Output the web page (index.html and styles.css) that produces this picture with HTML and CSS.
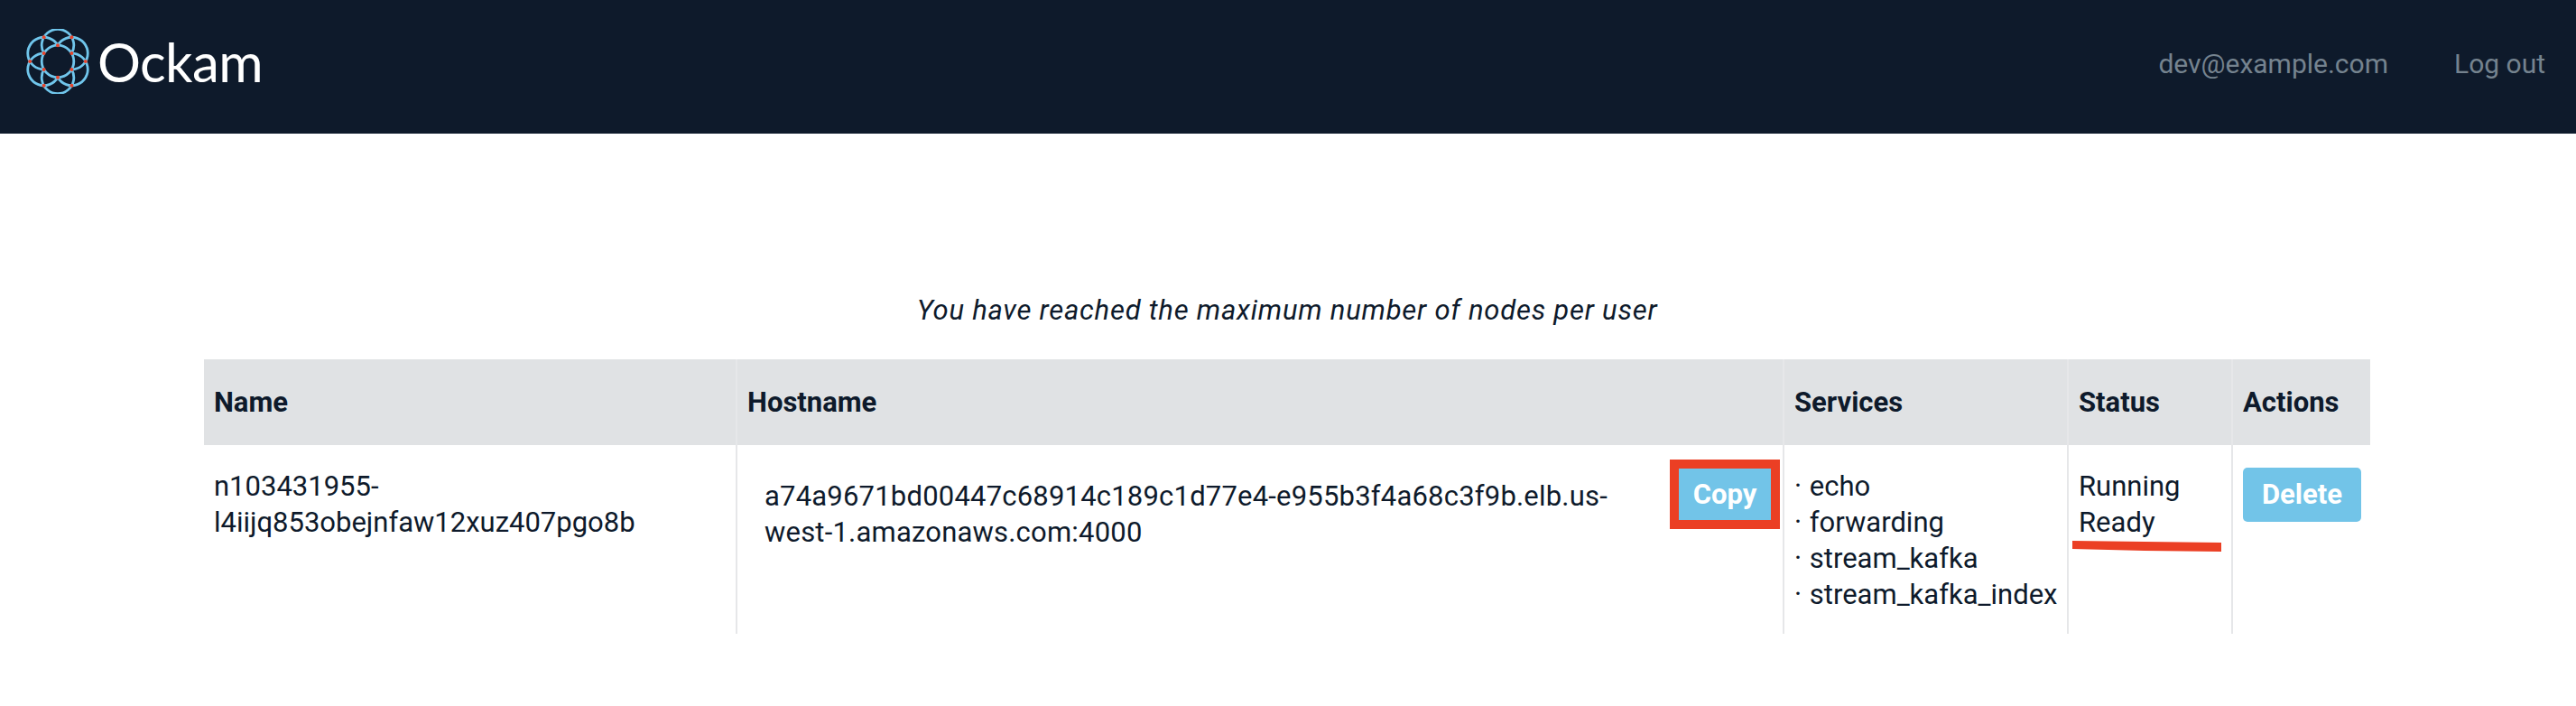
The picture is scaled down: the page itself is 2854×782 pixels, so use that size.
FILE: index.html
```html
<!DOCTYPE html>
<html lang="en">

<head>
    <meta charset="UTF-8" />
    <title>Ockam</title>
    <link rel="stylesheet" href="styles.css">
</head>

<body>
    <header class="topbar">
        <a class="brand">
            <svg class="brand-mark" viewBox="-36 -36 72 72">
                <defs>
                    <path id="petal" d="M-15.4 -8.9 A17.8 17.8 0 1 1 15.4 -8.9" />
                </defs>
                <g class="mark-lines">
                    <circle r="17.8" />
                    <use href="#petal" transform="rotate(0)" />
                    <use href="#petal" transform="rotate(60)" />
                    <use href="#petal" transform="rotate(120)" />
                    <use href="#petal" transform="rotate(180)" />
                    <use href="#petal" transform="rotate(240)" />
                    <use href="#petal" transform="rotate(300)" />
                </g>
                <g class="mark-dots">
                    <circle cx="0" cy="-17.8" r="2" />
                    <circle cx="15.4" cy="-8.9" r="2" />
                    <circle cx="15.4" cy="8.9" r="2" />
                    <circle cx="0" cy="17.8" r="2" />
                    <circle cx="-15.4" cy="8.9" r="2" />
                    <circle cx="-15.4" cy="-8.9" r="2" />
                    <circle cx="30.8" cy="0" r="2" />
                    <circle cx="15.4" cy="-26.7" r="2" />
                    <circle cx="-15.4" cy="-26.7" r="2" />
                    <circle cx="-30.8" cy="0" r="2" />
                    <circle cx="-15.4" cy="26.7" r="2" />
                    <circle cx="15.4" cy="26.7" r="2" />
                </g>
            </svg>
            <span class="brand-name">Ockam</span>
        </a>
        <nav class="topnav">
            <span>dev@example.com</span>
            <span>Log out</span>
        </nav>
    </header>

    <main class="content">
        <p class="limit-note">You have reached the maximum number of nodes per user</p>

        <table class="nodes">
            <thead>
                <tr>
                    <th class="col-name">Name</th>
                    <th class="col-host">Hostname</th>
                    <th class="col-services">Services</th>
                    <th class="col-status">Status</th>
                    <th class="col-actions">Actions</th>
                </tr>
            </thead>
            <tbody>
                <tr>
                    <td>n103431955-<br>l4iijq853obejnfaw12xuz407pgo8b</td>
                    <td>
                        <div class="host">
                            <span class="host-text">a74a9671bd00447c68914c189c1d77e4-e955b3f4a68c3f9b.elb.us-west-1.amazonaws.com:4000</span>
                            <button type="button" class="btn btn-copy">Copy</button>
                        </div>
                    </td>
                    <td class="services">
                        <div>· echo</div>
                        <div>· forwarding</div>
                        <div>· stream_kafka</div>
                        <div>· stream_kafka_index</div>
                    </td>
                    <td class="status">
                        <div>Running</div>
                        <div>Ready</div>
                        <svg class="scribble" viewBox="0 0 165 12" preserveAspectRatio="none">
                            <polygon points="0,0 80,1 165,2 165,12 80,11 0,9" />
                        </svg>
                    </td>
                    <td><button type="button" class="btn btn-delete">Delete</button></td>
                </tr>
            </tbody>
        </table>
    </main>
</body>

</html>
```

FILE: styles.css
```css
* {
    box-sizing: border-box;
}

body {
    margin: 0;
    background-color: white;
    color: #0e1a2b;
    font-family: "Roboto", "Liberation Sans", sans-serif;
    font-size: 31px;
    line-height: 40px;
}

.topbar {
    height: 148px;
    background-color: #0e1a2b;
    display: flex;
    align-items: center;
    justify-content: space-between;
    padding: 0 34px 12px 28px;
}

.brand {
    display: flex;
    align-items: center;
    gap: 8px;
}

.brand-mark {
    width: 72px;
    height: 72px;
}

.mark-lines {
    fill: none;
    stroke: #70c6ec;
    stroke-width: 2.8;
}

.mark-dots {
    fill: #e8452c;
}

.brand-name {
    color: white;
    font-family: "Lato", sans-serif;
    font-weight: 400;
    font-size: 60px;
    letter-spacing: -0.6px;
    line-height: 72px;
}

.topnav {
    display: flex;
    gap: 73px;
    margin-top: 5px;
    color: #75838f;
    font-size: 30px;
}

.content {
    padding: 176px 228px 0 226px;
}

.limit-note {
    margin: 0 0 34px;
    text-align: center;
    font-style: italic;
    letter-spacing: 0.77px;
}

.nodes {
    width: 2400px;
    table-layout: fixed;
    border-collapse: collapse;
}

.nodes th {
    height: 95px;
    background-color: #e0e2e4;
    border-left: 2px solid #e6e7e9;
    padding: 0 11px;
    text-align: left;
    font-weight: 700;
}

.nodes td {
    height: 209px;
    border-left: 2px solid #e6e7e9;
    padding: 26px 11px 23px;
    vertical-align: top;
}

.nodes th:first-child,
.nodes td:first-child {
    border-left: none;
}

.col-name {
    width: 590px;
}

.col-host {
    width: 1160px;
}

.col-services {
    width: 315px;
}

.col-status {
    width: 182px;
}

.col-actions {
    width: 153px;
}

.host {
    display: flex;
    align-items: flex-start;
    gap: 58px;
    margin: -10px -8px 0 0;
    padding-left: 19px;
}

.host-text {
    flex: 1;
    padding-top: 21px;
    overflow-wrap: anywhere;
    letter-spacing: 0.2px;
}

.services {
    white-space: nowrap;
    word-spacing: 1px;
}

.btn {
    background-color: #72c4e8;
    color: white;
    border: none;
    font-family: inherit;
    font-size: 31px;
    font-weight: 700;
    line-height: 40px;
}

.btn-copy {
    flex: none;
    width: 122px;
    height: 77px;
    border: 10px solid #eb3f24;
    padding: 0;
}

.btn-delete {
    width: 131px;
    height: 60px;
    border-radius: 5px;
    margin-top: -1px;
    padding: 0;
}

.status {
    position: relative;
}

.scribble {
    position: absolute;
    left: 4px;
    top: 106px;
    width: 165px;
    height: 12px;
    fill: #eb3f24;
}
```
